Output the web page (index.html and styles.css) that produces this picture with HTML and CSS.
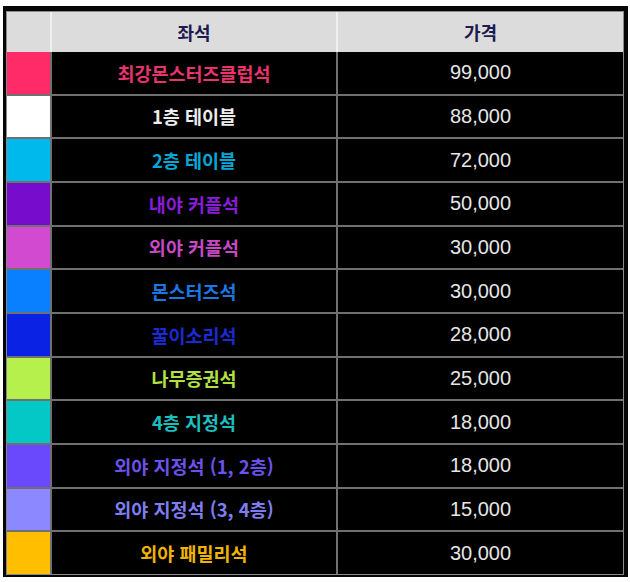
FILE: index.html
```html
<!DOCTYPE html>
<html lang="ko">
<head>
<meta charset="utf-8">
<title>좌석 가격표</title>
<link rel="stylesheet" href="styles.css">
</head>
<body>
<div class="frame">
  <div class="table">
    <div class="head blank"></div>
    <div class="head">좌석</div>
    <div class="head">가격</div>

    <div class="sw c1"></div><div class="seat t1">최강몬스터즈클럽석</div><div class="price">99,000</div>
    <div class="sw c2"></div><div class="seat t2">1층 테이블</div><div class="price">88,000</div>
    <div class="sw c3"></div><div class="seat t3">2층 테이블</div><div class="price">72,000</div>
    <div class="sw c4"></div><div class="seat t4">내야 커플석</div><div class="price">50,000</div>
    <div class="sw c5"></div><div class="seat t5">외야 커플석</div><div class="price">30,000</div>
    <div class="sw c6"></div><div class="seat t6">몬스터즈석</div><div class="price">30,000</div>
    <div class="sw c7"></div><div class="seat t7">꿀이소리석</div><div class="price">28,000</div>
    <div class="sw c8"></div><div class="seat t8">나무증권석</div><div class="price">25,000</div>
    <div class="sw c9"></div><div class="seat t9">4층 지정석</div><div class="price">18,000</div>
    <div class="sw c10"></div><div class="seat t10">외야 지정석 (1, 2층)</div><div class="price">18,000</div>
    <div class="sw c11"></div><div class="seat t11">외야 지정석 (3, 4층)</div><div class="price">15,000</div>
    <div class="sw c12"></div><div class="seat t12">외야 패밀리석</div><div class="price">30,000</div>
  </div>
</div>
</body>
</html>
```
FILE: styles.css
```css
html, body {
  margin: 0;
  padding: 0;
  background: #ffffff;
}
body {
  width: 630px;
  height: 582px;
  overflow: hidden;
}
.frame {
  margin: 6px 0 0 3px;
  width: 625px;
  height: 571px;
  box-sizing: border-box;
  background: #050505;
  padding: 5px 4px 2px 3px;
}
.table {
  box-sizing: border-box;
  height: 564px;
  border: 1px solid #8a8a8a;
  background: #707070;
  display: grid;
  grid-template-columns: 43px 284px 285px;
  grid-template-rows: 38px repeat(12, 1fr);
  column-gap: 2px;
  row-gap: 2px;
}
.head {
  background: #dcdcdc;
  color: #1d1b4f;
  font-family: "Noto Sans CJK KR", "Liberation Sans", sans-serif;
  font-weight: 700;
  font-size: 18px;
  display: flex;
  align-items: center;
  justify-content: center;
  margin-bottom: -2px;
}
.head + .head {
  box-shadow: -2px 0 0 #f0f0f0;
}
.seat, .price {
  background: #000;
  display: flex;
  align-items: center;
  justify-content: center;
}
.seat {
  font-family: "Noto Sans CJK KR", "Liberation Sans", sans-serif;
  font-weight: 700;
  font-size: 18.5px;
}
.price {
  font-family: "Liberation Sans", "Noto Sans CJK KR", sans-serif;
  font-size: 20px;
  color: #e6e6e6;
}
.c1 { background: #ff2a68; }
.c2 { background: #ffffff; }
.c3 { background: #00b9ec; }
.c4 { background: #780ccd; }
.c5 { background: #d24ad0; }
.c6 { background: #0880ff; }
.c7 { background: #0a22e4; }
.c8 { background: #b6f04c; }
.c9 { background: #04c8c6; }
.c10 { background: #6a48fb; }
.c11 { background: #8c88ff; }
.c12 { background: #ffbf00; }
.t1 { color: #e8336c; }
.t2 { color: #ededed; }
.t3 { color: #04a8d6; }
.t4 { color: #8a1cd8; }
.t5 { color: #c848c6; }
.t6 { color: #1a78e4; }
.t7 { color: #1a2ad4; }
.t8 { color: #b2e040; }
.t9 { color: #1cbfbf; }
.t10 { color: #6c52ea; }
.t11 { color: #7f7ef0; }
.t12 { color: #f0b400; }
```
